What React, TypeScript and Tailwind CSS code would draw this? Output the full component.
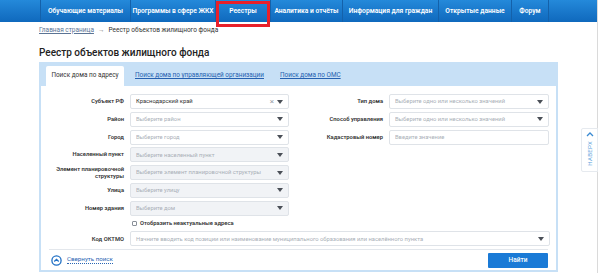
import React from 'react'

const navItems = [
  { label: 'Обучающие материалы', w: 'w-[90px]' },
  { label: 'Программы в сфере ЖКХ', w: 'w-[85px]' },
  { label: 'Реестры', w: 'w-[55px]', marked: true },
  { label: 'Аналитика и отчёты', w: 'w-[72px]' },
  { label: 'Информация для граждан', w: 'w-[96px]' },
  { label: 'Открытые данные', w: 'w-[73px]' },
  { label: 'Форум', w: 'w-[37px]' },
]

type Field = {
  label: string
  placeholder?: string
  value?: string
  disabled?: boolean
  clear?: boolean
  noCaret?: boolean
}

const leftFields: Field[] = [
  { label: 'Субъект РФ', value: 'Краснодарский край', clear: true },
  { label: 'Район', placeholder: 'Выберите район' },
  { label: 'Город', placeholder: 'Выберите город' },
  { label: 'Населенный пункт', placeholder: 'Выберите населенный пункт', disabled: true },
  { label: 'Элемент планировочной структуры', placeholder: 'Выберите элемент планировочной структуры', disabled: true },
  { label: 'Улица', placeholder: 'Выберите улицу', disabled: true },
  { label: 'Номер здания', placeholder: 'Выберите дом', disabled: true },
]

const rightFields: Field[] = [
  { label: 'Тип дома', placeholder: 'Выберите одно или несколько значений' },
  { label: 'Способ управления', placeholder: 'Выберите одно или несколько значений' },
  { label: 'Кадастровый номер', placeholder: 'Введите значение', noCaret: true },
]

function Caret() {
  return (
    <svg width="6" height="4" viewBox="0 0 6 4" className="shrink-0">
      <path d="M0 0 H6 L3 4 Z" fill="#4a4f57" />
    </svg>
  )
}

function Input({ f, className }: { f: Field; className: string }) {
  return (
    <div
      className={`h-[15px] shrink-0 flex items-center px-[5px] border border-[#dfe3e8] rounded-[2px] ${
        f.disabled ? 'bg-[#f1f3f6]' : 'bg-white'
      } ${className}`}
    >
      <span className={`flex-1 truncate text-[5.8px] ${f.value ? 'text-[#333]' : 'text-[#a9afb7]'}`}>
        {f.value ?? f.placeholder}
      </span>
      {f.clear && <span className="text-[8px] leading-none text-[#9aa0a8] mr-[3px]">×</span>}
      {!f.noCaret && <Caret />}
    </div>
  )
}

function Row({ f, labelW, inputW }: { f: Field; labelW: string; inputW: string }) {
  return (
    <div className="flex items-center h-[15px] shrink-0">
      <div className={`${labelW} pr-[6px] text-right text-[5.8px] leading-[7px] font-semibold text-[#333]`}>{f.label}</div>
      <Input f={f} className={inputW} />
    </div>
  )
}

export default function App() {
  return (
    <div className="relative w-[600px] h-[273px] overflow-hidden bg-white flex" style={{ fontFamily: 'Roboto, "Noto Sans", sans-serif' }}>
      <div className="w-[597px] flex flex-col shrink-0">
        {/* top nav */}
        <nav className="h-[22px] shrink-0 bg-gradient-to-b from-[#2489da] to-[#0f69bd] flex pl-[40px]">
          {navItems.map(n => (
            <div
              key={n.label}
              className={`${n.w} relative border-l border-[#1461aa] flex items-center justify-center text-white text-[6.7px] font-semibold whitespace-nowrap`}
            >
              {n.label}
              {n.marked && (
                <div className="absolute left-0 top-[1px] w-[54px] h-[26px] border-[3px] border-[#e8202a] z-10" />
              )}
            </div>
          ))}
          <div className="border-l border-[#1461aa]" />
        </nav>

        <div className="pl-[39px] shrink-0">
          {/* breadcrumb */}
          <div className="h-[16px] flex items-center text-[6.5px] pt-[1px]">
            <span className="text-[#5b7495] underline">Главная страница</span>
            <span className="text-[#777] mx-[4px]">→</span>
            <span className="text-[#333]">Реестр объектов жилищного фонда</span>
          </div>

          {/* title */}
          <h1 className="text-[10px] leading-[14px] font-medium text-[#222] mt-[8px] mb-[2px]">Реестр объектов жилищного фонда</h1>

          {/* panel */}
          <div className="w-[519px] border-2 border-t-0 border-[#c7e0f6] bg-white">
            <div className="h-[24px] bg-[#c7e0f6] flex items-end pl-[5px] text-[6.4px]">
              <div className="h-[20px] w-[78px] bg-white rounded-t-[2px] flex items-center justify-center text-[#333]">
                Поиск дома по адресу
              </div>
              <div className="h-[20px] flex items-center ml-[11px] text-[#2560b0] underline">
                Поиск дома по управляющей организации
              </div>
              <div className="h-[20px] flex items-center ml-[16px] text-[#2560b0] underline">
                Поиск дома по ОМС
              </div>
            </div>

            <div className="pt-[8px]">
              <div className="flex">
                <div className="flex flex-col gap-[2.8px]">
                  {leftFields.map(f => (
                    <Row key={f.label} f={f} labelW="w-[89px]" inputW="w-[159px]" />
                  ))}
                  <div className="flex items-center h-[10px] pl-[91px] gap-[3px]">
                    <div className="w-[5px] h-[5px] border border-[#8a9099] rounded-[1px] bg-white" />
                    <span className="text-[5.8px] font-semibold text-[#333]">Отобразить неактуальные адреса</span>
                  </div>
                </div>
                <div className="flex flex-col gap-[2.8px] ml-[5px]">
                  {rightFields.map(f => (
                    <Row key={f.label} f={f} labelW="w-[95px]" inputW="w-[160px]" />
                  ))}
                </div>
              </div>

              <div className="flex items-center h-[15px] mt-[2.8px]">
                <div className="w-[89px] pr-[6px] text-right text-[5.8px] font-semibold text-[#333]">Код ОКТМО</div>
                <Input
                  f={{ label: 'Код ОКТМО', placeholder: 'Начните вводить код позиции или наименование муниципального образования или населённого пункта' }}
                  className="w-[420px]"
                />
              </div>

              <div className="mx-[8px] mt-[3px] border-t border-[#e3e7ec] flex items-center justify-between h-[21px] pl-[2px]">
                <div className="flex items-center gap-[5px]">
                  <svg width="11" height="11" viewBox="0 0 11 11">
                    <circle cx="5.5" cy="5.5" r="4.6" fill="none" stroke="#1f6fc4" strokeWidth="1.3" />
                    <path d="M3.3 6.5 L5.5 4.3 L7.7 6.5" fill="none" stroke="#1f6fc4" strokeWidth="1.3" />
                  </svg>
                  <span className="text-[6.2px] text-[#2a66b3] border-b border-dotted border-[#2a66b3] leading-[7px]">Свернуть поиск</span>
                </div>
                <button className="w-[60px] h-[15px] bg-[#1a7ad6] rounded-[1px] text-white text-[6.5px] font-medium">Найти</button>
              </div>
            </div>
          </div>
        </div>
      </div>

      {/* scrollbar edge */}
      <div className="w-[3px] border-l border-[#dadada] bg-white" />

      {/* back-to-top tab */}
      <div className="absolute left-[581px] top-[128px] w-[17px] h-[44px] bg-white border border-[#e6eaef] rounded-l-[2px] flex flex-col items-center pt-[3px] text-[#5ea3dc]">
        <svg width="8" height="5" viewBox="0 0 8 5">
          <path d="M1 4 L4 1 L7 4" fill="none" stroke="#3a8ad2" strokeWidth="1.3" />
        </svg>
        <span className="mt-[4px] text-[6px] leading-none tracking-[0.3px] [writing-mode:vertical-rl] rotate-180">НАВЕРХ</span>
      </div>
    </div>
  )
}
